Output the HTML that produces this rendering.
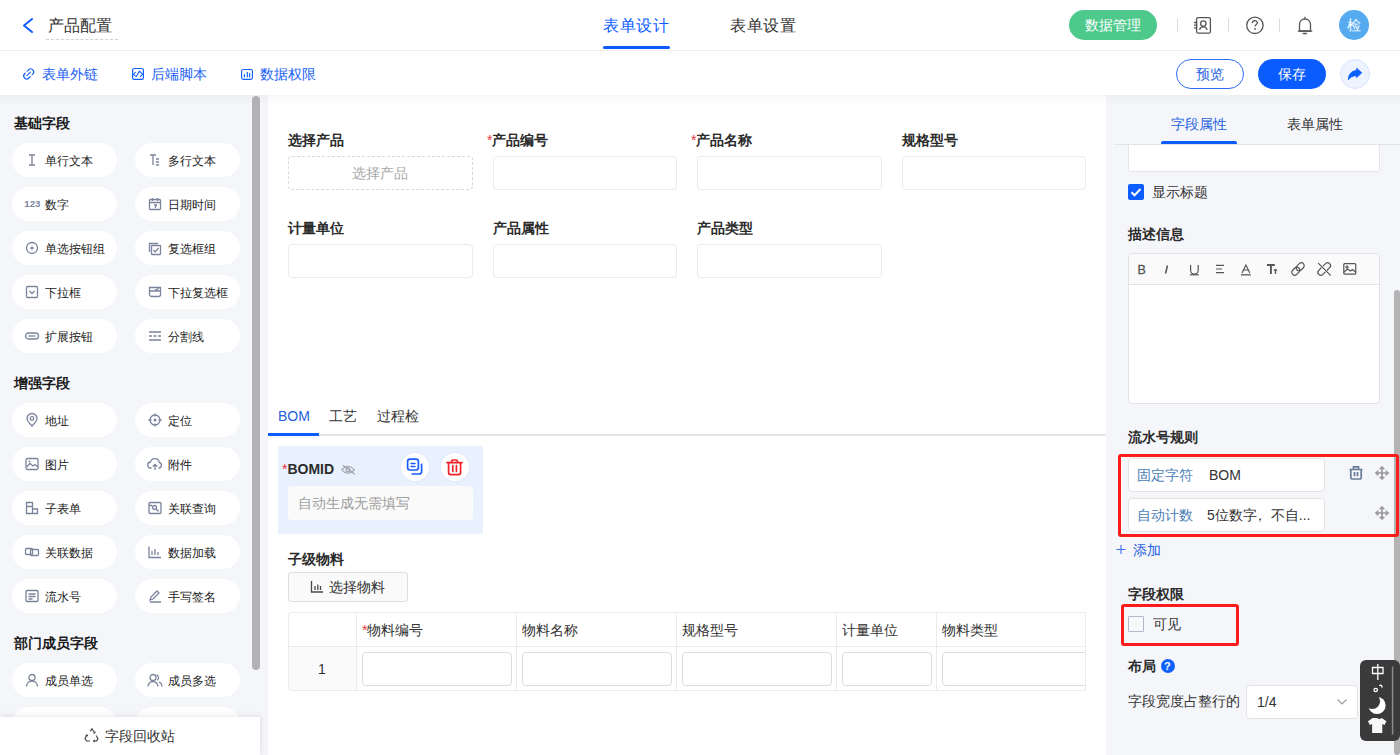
<!DOCTYPE html>
<html><head><meta charset="utf-8">
<style>
*{box-sizing:border-box;margin:0;padding:0}
html,body{width:1400px;height:755px;overflow:hidden;background:#fff;font-family:"Liberation Sans",sans-serif;color:#333}
.a{position:absolute}
.t{position:absolute;white-space:nowrap;line-height:20px}
svg{position:absolute;overflow:visible}
/* header */
#hdr{left:0;top:0;width:1400px;height:51px;background:#fff;border-bottom:1px solid #eeeeee}
#bar2{left:0;top:51px;width:1400px;height:45px;background:#fff}
.blue{color:#0d5cff}
.link{font-size:14px;color:#1a5ff5}
.sep{position:absolute;top:18px;width:1px;height:14px;background:#dcdcdc}
/* left */
#left{left:0;top:95px;width:268px;height:660px;background:#f5f6fa}
.sec{position:absolute;left:14px;font-size:14px;font-weight:bold;color:#1a1a1a;line-height:20px}
.pill{position:absolute;width:105px;height:34px;border-radius:17px;background:#fff}
.pill .t{left:33px;top:8px;font-size:12px;color:#222}
.pill svg{left:12px;top:11px}
/* main */
#main{left:268px;top:95px;width:838px;height:660px;background:#fff}
.lbl{position:absolute;font-size:14px;font-weight:bold;color:#2b2b2b;line-height:20px;white-space:nowrap}
.req{color:#e8363b;font-weight:normal}
.inp{position:absolute;width:184px;height:34px;border:1px solid #eaeaea;border-radius:4px;background:#fff}
/* right */
#right{left:1106px;top:95px;width:294px;height:660px;background:#f5f6fa}
</style></head><body>

<!-- HEADER -->
<div id="hdr" class="a"></div>
<svg style="left:0;top:0" width="60" height="50"><path d="M32 19 L24 25.5 L32 32" fill="none" stroke="#0d5cff" stroke-width="2" stroke-linecap="round" stroke-linejoin="round"/></svg>
<div class="t" style="left:48px;top:16px;font-size:16px;color:#333">产品配置</div>
<div class="a" style="left:46px;top:39px;width:72px;height:0;border-top:1px dashed #d0d0d0"></div>

<div class="t blue" style="left:603px;top:16px;font-size:16px;letter-spacing:0.7px">表单设计</div>
<div class="a" style="left:603px;top:46px;width:67px;height:3px;border-radius:2px;background:#0d5cff"></div>
<div class="t" style="left:730px;top:16px;font-size:16px;color:#333;letter-spacing:0.7px">表单设置</div>

<div class="a" style="left:1069px;top:10px;width:88px;height:30px;border-radius:15px;background:#4cc98b"></div>
<div class="t" style="left:1085px;top:15px;font-size:14px;color:#fff">数据管理</div>
<div class="sep" style="left:1177px"></div>
<div class="sep" style="left:1228px"></div>
<div class="sep" style="left:1279px"></div>
<svg style="left:0;top:0" width="1400" height="50"><g fill="none" stroke="#555" stroke-width="1.3">
<rect x="1196.6" y="17.6" width="13.8" height="15.6" rx="1.5"/>
<circle cx="1203.3" cy="23.6" r="2.7"/><path d="M1199.6 29.8 C1200.2 25.8 1206.4 25.8 1207 29.8"/>
<path d="M1194 22.5h3.3M1194 25.1h3.3M1194 27.8h3.3"/>
<circle cx="1254.9" cy="25.3" r="8.2"/>
<path d="M1252.4 22.9 C1252.4 20 1257.4 20 1257.4 22.7 C1257.4 24.6 1255 24.4 1255 26.6"/>
<path d="M1299.5 31 V24.5 C1299.5 21 1302 19 1305 19 C1308 19 1310.5 21 1310.5 24.5 V31 Z" stroke-linejoin="round"/>
<path d="M1298.3 31.2h13.4" stroke-linecap="round"/><path d="M1303.3 33.5h3.2" stroke-linecap="round"/><path d="M1305 16.8v2"/>
</g><circle cx="1255" cy="29" r="0.9" fill="#555"/></svg>
<div class="a" style="left:1339px;top:10px;width:30px;height:30px;border-radius:15px;background:#55aaf0"></div>
<div class="t" style="left:1347px;top:15px;font-size:14px;color:#fff">检</div>

<!-- BAR 2 -->
<svg style="left:0;top:0" width="400" height="95"><g fill="none" stroke="#1060ff" stroke-width="1.15" stroke-linecap="round">
<g transform="translate(28.7,73.9) rotate(-45)"><path d="M0.9 -3H2.8A3 3 0 0 1 2.8 3H1.9M-0.9 3H-2.8A3 3 0 0 1 -2.8 -3H-1.9M-2.4 0H2.4"/></g>
<rect x="132.6" y="68.5" width="10.8" height="10.9" rx="1.6"/><path d="M135.4 72.3L133.2 74.4L136.3 76.6L139.4 71.2L142.6 74.3L140.3 76.6" stroke-width="1.05"/>
<rect x="241.6" y="69.5" width="10.8" height="9.9" rx="1.8"/><path d="M244.4 74.6v2.2M247.3 72.3v4.5M249.6 73.6v3.2" stroke-width="1.2"/>
</g></svg>
<div class="t link" style="left:42px;top:64px">表单外链</div>
<div class="t link" style="left:151px;top:64px">后端脚本</div>
<div class="t link" style="left:260px;top:64px">数据权限</div>

<div class="a" style="left:1176px;top:59px;width:68px;height:30px;border-radius:15px;border:1px solid #2c6cf6;background:#fff"></div>
<div class="t" style="left:1196px;top:64px;font-size:14px;color:#1f5fe0">预览</div>
<div class="a" style="left:1258px;top:59px;width:68px;height:30px;border-radius:15px;background:#0b5cff"></div>
<div class="t" style="left:1278px;top:64px;font-size:14px;color:#fff">保存</div>
<div class="a" style="left:1340px;top:59px;width:30px;height:30px;border-radius:15px;border:1px solid #d8e5fb;background:#eef4ff"></div>
<svg style="left:0;top:0" width="1400" height="95"><path d="M1348.4 79.8 C1348.3 74.5 1351.5 70.8 1356.6 70.5 L1356.6 68.2 L1361.8 72.8 L1356.6 77.6 L1356.6 75.8 C1352.5 75.8 1350.2 77.2 1348.4 79.8 Z" fill="#0a5fff" stroke="#0a5fff" stroke-width="0.8" stroke-linejoin="round"/></svg>

<!-- LEFT PANEL -->
<div id="left" class="a"></div>

<div class="a" style="left:252px;top:96px;width:8px;height:574px;border-radius:4px;background:#b3b3b3"></div>

<div class="sec" style="top:113px">基础字段</div>
<div class="sec" style="top:373px">增强字段</div>
<div class="sec" style="top:633px">部门成员字段</div>

<div class="pill" style="left:12px;top:143px"><svg width="16" height="14" style="left:12px;top:10px"><path d="M5 2h6M8 2v10M5 12h6" fill="none" stroke="#7b849c" stroke-width="1.3"/></svg><div class="t">单行文本</div></div>
<div class="pill" style="left:135px;top:143px"><svg width="16" height="14" style="left:12px;top:10px"><path d="M3 2h6M6 2v10M9 6h3M9 9h3M9 12h3" fill="none" stroke="#7b849c" stroke-width="1.3"/></svg><div class="t">多行文本</div></div>
<div class="pill" style="left:12px;top:187px"><svg width="16" height="14" style="left:12px;top:10px"><text x="0.3" y="10.1" style="font-family:'Liberation Sans',sans-serif;font-size:9.6px;font-weight:bold" fill="#7b849c">123</text></svg><div class="t">数字</div></div>
<div class="pill" style="left:135px;top:187px"><svg width="16" height="14" style="left:12px;top:10px"><rect x="2.5" y="2.5" width="11" height="10" rx="1" fill="none" stroke="#7b849c" stroke-width="1.3"/><path d="M2.5 5.5h11M5.5 1v3M10.5 1v3M7 8h2.5l-1.5 3" fill="none" stroke="#7b849c" stroke-width="1.3"/></svg><div class="t">日期时间</div></div>
<div class="pill" style="left:12px;top:231px"><svg width="16" height="14" style="left:12px;top:10px"><circle cx="8" cy="7" r="5.5" fill="none" stroke="#7b849c" stroke-width="1.3"/><circle cx="8" cy="7" r="1.6" fill="#7b849c"/></svg><div class="t">单选按钮组</div></div>
<div class="pill" style="left:135px;top:231px"><svg width="16" height="14" style="left:12px;top:10px"><path d="M2.5 11V2.5H11" fill="none" stroke="#7b849c" stroke-width="1.3"/><rect x="4.5" y="4.5" width="9" height="9" rx="0.5" fill="none" stroke="#7b849c" stroke-width="1.3"/><path d="M6.5 9l1.7 1.7L11.5 7" fill="none" stroke="#7b849c" stroke-width="1.3"/></svg><div class="t">复选框组</div></div>
<div class="pill" style="left:12px;top:275px"><svg width="16" height="14" style="left:12px;top:10px"><rect x="2.5" y="1.5" width="11" height="11" rx="1" fill="none" stroke="#7b849c" stroke-width="1.3"/><path d="M5.5 6l2.5 2.5L10.5 6" fill="none" stroke="#7b849c" stroke-width="1.3"/></svg><div class="t">下拉框</div></div>
<div class="pill" style="left:135px;top:275px"><svg width="16" height="14" style="left:12px;top:10px"><path d="M2.5 2.5h11v7a2 2 0 0 1-2 2h-7a2 2 0 0 1-2-2z M2.5 6h11" fill="none" stroke="#7b849c" stroke-width="1.3"/><path d="M8 4.5l1.5 1 2-2.5" fill="none" stroke="#7b849c" stroke-width="1.3"/></svg><div class="t">下拉复选框</div></div>
<div class="pill" style="left:12px;top:319px"><svg width="16" height="14" style="left:12px;top:10px"><rect x="1.5" y="4" width="13" height="6" rx="3" fill="none" stroke="#7b849c" stroke-width="1.3"/><path d="M4.5 7h7" fill="none" stroke="#7b849c" stroke-width="1.3"/></svg><div class="t">扩展按钮</div></div>
<div class="pill" style="left:135px;top:319px"><svg width="16" height="14" style="left:12px;top:10px"><path d="M2 3h12M2 7h3M6.5 7h3M11 7h3M2 11h12" fill="none" stroke="#7b849c" stroke-width="1.3"/></svg><div class="t">分割线</div></div>
<div class="pill" style="left:12px;top:403px"><svg width="16" height="14" style="left:12px;top:10px"><path d="M8 13C4.5 9.5 3 7.5 3 5.5a5 5 0 0 1 10 0c0 2-1.5 4-5 7.5z" fill="none" stroke="#7b849c" stroke-width="1.3"/><circle cx="8" cy="5.5" r="1.8" fill="none" stroke="#7b849c" stroke-width="1.3"/></svg><div class="t">地址</div></div>
<div class="pill" style="left:135px;top:403px"><svg width="16" height="14" style="left:12px;top:10px"><circle cx="8" cy="7" r="5" fill="none" stroke="#7b849c" stroke-width="1.3"/><circle cx="8" cy="7" r="1.5" fill="#7b849c"/><path d="M8 0.5v3M8 10.5v3M1.5 7h3M11.5 7h3" fill="none" stroke="#7b849c" stroke-width="1.3"/></svg><div class="t">定位</div></div>
<div class="pill" style="left:12px;top:447px"><svg width="16" height="14" style="left:12px;top:10px"><rect x="2" y="1.5" width="12" height="11" rx="1.5" fill="none" stroke="#7b849c" stroke-width="1.3"/><path d="M2.5 10l3.5-3.5 3 2.5 2-1.5 3 2.5" fill="none" stroke="#7b849c" stroke-width="1.3"/><circle cx="5.5" cy="4.5" r="0.9" fill="#7b849c"/></svg><div class="t">图片</div></div>
<div class="pill" style="left:135px;top:447px"><svg width="16" height="14" style="left:12px;top:10px"><path d="M4.5 11H4a3 3 0 0 1-0.5-6 4.5 4.5 0 0 1 8.8 0.5A2.8 2.8 0 0 1 12 11h-0.5M8 13V7.5M5.8 9.5L8 7.3l2.2 2.2" fill="none" stroke="#7b849c" stroke-width="1.3"/></svg><div class="t">附件</div></div>
<div class="pill" style="left:12px;top:491px"><svg width="16" height="14" style="left:12px;top:10px"><path d="M2.5 1.5h6v11h-6zM2.5 5.5h6M8.5 8h5v4.5h-5" fill="none" stroke="#7b849c" stroke-width="1.3"/></svg><div class="t">子表单</div></div>
<div class="pill" style="left:135px;top:491px"><svg width="16" height="14" style="left:12px;top:10px"><rect x="2" y="1.5" width="12" height="11" rx="1" fill="none" stroke="#7b849c" stroke-width="1.3"/><circle cx="7.5" cy="6.5" r="2" fill="none" stroke="#7b849c" stroke-width="1.3"/><path d="M9 8l2.5 2.5M2 4.5h3" fill="none" stroke="#7b849c" stroke-width="1.3"/></svg><div class="t">关联查询</div></div>
<div class="pill" style="left:12px;top:535px"><svg width="16" height="14" style="left:12px;top:10px"><rect x="1.5" y="3.5" width="7" height="6" rx="1" fill="none" stroke="#7b849c" stroke-width="1.3"/><rect x="6.5" y="4.5" width="8" height="6" rx="1" fill="none" stroke="#7b849c" stroke-width="1.3"/></svg><div class="t">关联数据</div></div>
<div class="pill" style="left:135px;top:535px"><svg width="16" height="14" style="left:12px;top:10px"><path d="M2 1.5V12.5h12M5 10V6M8 10V4M11 10V7" fill="none" stroke="#7b849c" stroke-width="1.3"/></svg><div class="t">数据加载</div></div>
<div class="pill" style="left:12px;top:579px"><svg width="16" height="14" style="left:12px;top:10px"><rect x="2" y="1.5" width="12" height="11" rx="1" fill="none" stroke="#7b849c" stroke-width="1.3"/><path d="M4.5 5h7M4.5 7.5h7M4.5 10h4" fill="none" stroke="#7b849c" stroke-width="1.3"/></svg><div class="t">流水号</div></div>
<div class="pill" style="left:135px;top:579px"><svg width="16" height="14" style="left:12px;top:10px"><path d="M3 11l1-3 6-6 2 2-6 6zM3 13h11" fill="none" stroke="#7b849c" stroke-width="1.3"/></svg><div class="t">手写签名</div></div>
<div class="pill" style="left:12px;top:663px"><svg width="16" height="14" style="left:12px;top:10px"><circle cx="8" cy="4.5" r="3" fill="none" stroke="#7b849c" stroke-width="1.3"/><path d="M2.5 13.5a5.5 5.5 0 0 1 11 0" fill="none" stroke="#7b849c" stroke-width="1.3"/></svg><div class="t">成员单选</div></div>
<div class="pill" style="left:135px;top:663px"><svg width="16" height="14" style="left:12px;top:10px"><circle cx="6" cy="4.5" r="3" fill="none" stroke="#7b849c" stroke-width="1.3"/><path d="M1 13.5a5 5 0 0 1 10 0M9.5 1.8a3 3 0 0 1 0.5 5.5M12 9a5 5 0 0 1 3 4.5" fill="none" stroke="#7b849c" stroke-width="1.3"/></svg><div class="t">成员多选</div></div>
<div class="pill" style="left:12px;top:707px"></div><div class="pill" style="left:135px;top:707px"></div>
<div class="a" style="left:0;top:717px;width:260px;height:38px;background:#fff;box-shadow:0 -2px 6px rgba(0,0,0,0.06),2px 0 4px rgba(0,0,0,0.04)"></div>
<svg width="16" height="16" style="left:84px;top:728px"><path d="M6.3 3.2L8 0.8l2.5 4M12 7.5l2 3.2-1.5 2.3H9.5M6 13H2.5L1 10.5 3 7" fill="none" stroke="#444" stroke-width="1.2"/><path d="M9.5 5.2l1.3-0.2 0.4-1.3M11 12l-1.3 1 1.2 1M3.8 8.2L3 7l-1.3 0.6" fill="none" stroke="#444" stroke-width="1.1"/></svg>
<div class="t" style="left:105px;top:726px;font-size:14px;color:#333">字段回收站</div>

<!-- MAIN -->
<div id="main" class="a"></div>


<div class="lbl" style="left:288px;top:130px">选择产品</div>
<div class="a" style="left:288px;top:156px;width:185px;height:34px;border:1px dashed #d9d9d9;border-radius:4px"></div>
<div class="t" style="left:352px;top:163px;font-size:14px;color:#a8a8a8">选择产品</div>
<div class="lbl" style="left:487px;top:130px"><span class="req">*</span>产品编号</div>
<div class="inp" style="left:493px;top:156px"></div>
<div class="lbl" style="left:691px;top:130px"><span class="req">*</span>产品名称</div>
<div class="inp" style="left:697px;top:156px;width:185px"></div>
<div class="lbl" style="left:902px;top:130px">规格型号</div>
<div class="inp" style="left:902px;top:156px"></div>
<div class="lbl" style="left:288px;top:218px">计量单位</div>
<div class="inp" style="left:288px;top:244px;width:185px"></div>
<div class="lbl" style="left:493px;top:218px">产品属性</div>
<div class="inp" style="left:493px;top:244px"></div>
<div class="lbl" style="left:697px;top:218px">产品类型</div>
<div class="inp" style="left:697px;top:244px;width:185px"></div>

<!-- tabs -->
<div class="t" style="left:278px;top:406px;font-size:14px;color:#1f5fe0">BOM</div>
<div class="t" style="left:329px;top:406px;font-size:14px;color:#333">工艺</div>
<div class="t" style="left:377px;top:406px;font-size:14px;color:#333">过程检</div>
<div class="a" style="left:268px;top:434px;width:838px;height:2px;background:#e4e4e4"></div>
<div class="a" style="left:268px;top:433px;width:51px;height:3px;background:#0d5cff"></div>

<!-- BOMID card -->
<div class="a" style="left:278px;top:446px;width:205px;height:88px;background:#e9f1fe"></div>
<div class="lbl" style="left:282px;top:459px"><span class="req">*</span>BOMID</div>
<div class="a" style="left:401px;top:453px;width:28px;height:28px;border-radius:14px;background:#fff;box-shadow:0 0 3px rgba(30,80,200,0.08)"></div>
<div class="a" style="left:441px;top:453px;width:28px;height:28px;border-radius:14px;background:#fff;box-shadow:0 0 3px rgba(30,80,200,0.08)"></div>
<svg style="left:0;top:0" width="1400" height="755">
<g fill="none" stroke="#a0a0a8" stroke-width="1.1"><path d="M341.8 469.8 Q348 462.8 354.4 469.8 Q348 476.8 341.8 469.8Z"/><circle cx="348" cy="469.8" r="2"/><path d="M342.8 465.3 L354.8 474.3"/></g>
<g fill="none" stroke="#1a5cff" stroke-width="1.7" stroke-linecap="round"><rect x="407.6" y="459.2" width="10.8" height="10.8" rx="2.4"/><path d="M411 463.6h4M411 466.6h4" stroke-width="1.5"/><path d="M421.6 464.3V471.6a2.4 2.4 0 0 1-2.4 2.4H412.2"/></g>
<g fill="none" stroke="#f0232a" stroke-width="1.7" stroke-linecap="round"><path d="M447 462.6h15"/><path d="M451.6 462.4v-1.2a1.2 1.2 0 0 1 1.2-1.2h3.4a1.2 1.2 0 0 1 1.2 1.2v1.2"/><path d="M448.6 462.8v9.8a2 2 0 0 0 2 2h8a2 2 0 0 0 2-2v-9.8"/><path d="M452.8 465.6v5.8M456.4 465.6v5.8"/></g>
</svg>
<div class="a" style="left:288px;top:486px;width:185px;height:34px;border-radius:4px;background:#fafafa"></div>
<div class="t" style="left:298px;top:493px;font-size:14px;color:#9e9e9e">自动生成无需填写</div>

<div class="lbl" style="left:288px;top:549px">子级物料</div>
<div class="a" style="left:288px;top:572px;width:120px;height:30px;border:1px solid #dedede;border-radius:3px;background:#fafafa"></div>
<svg width="16" height="16" style="left:309px;top:579px"><path d="M2.5 2v11h11.5M6 11V7M8.8 11V5.5M11.5 11V7" fill="none" stroke="#4a4a4a" stroke-width="1.3"/></svg>
<div class="t" style="left:329px;top:577px;font-size:14px;color:#333">选择物料</div>

<!-- table -->
<div class="a" style="left:288px;top:612px;width:798px;height:79px;border:1px solid #ebebeb;border-radius:3px 0 0 3px"></div>
<div class="a" style="left:289px;top:647px;width:67px;height:43px;background:#fafafa"></div>
<div class="a" style="left:289px;top:646px;width:796px;height:1px;background:#ebebeb"></div>
<div class="a" style="left:356px;top:613px;width:1px;height:77px;background:#ebebeb"></div>
<div class="a" style="left:516px;top:613px;width:1px;height:77px;background:#ebebeb"></div>
<div class="a" style="left:676px;top:613px;width:1px;height:77px;background:#ebebeb"></div>
<div class="a" style="left:836px;top:613px;width:1px;height:77px;background:#ebebeb"></div>
<div class="a" style="left:936px;top:613px;width:1px;height:77px;background:#ebebeb"></div>
<div class="t" style="left:362px;top:620px;font-size:14px;color:#333"><span style="color:#e8363b">*</span>物料编号</div>
<div class="t" style="left:522px;top:620px;font-size:14px;color:#333">物料名称</div>
<div class="t" style="left:682px;top:620px;font-size:14px;color:#333">规格型号</div>
<div class="t" style="left:842px;top:620px;font-size:14px;color:#333">计量单位</div>
<div class="t" style="left:942px;top:620px;font-size:14px;color:#333">物料类型</div>
<div class="t" style="left:318px;top:659px;font-size:14px;color:#333">1</div>
<div class="a" style="left:362px;top:652px;width:150px;height:34px;border:1px solid #dcdcdc;border-radius:4px"></div>
<div class="a" style="left:522px;top:652px;width:150px;height:34px;border:1px solid #dcdcdc;border-radius:4px"></div>
<div class="a" style="left:682px;top:652px;width:150px;height:34px;border:1px solid #dcdcdc;border-radius:4px"></div>
<div class="a" style="left:842px;top:652px;width:90px;height:34px;border:1px solid #dcdcdc;border-radius:4px"></div>
<div class="a" style="left:937px;top:647px;width:148px;height:43px;overflow:hidden"><div class="a" style="left:5px;top:5px;width:160px;height:34px;border:1px solid #dcdcdc;border-radius:4px"></div></div>


<!-- RIGHT -->
<div id="right" class="a"></div>

<div class="t" style="left:1171px;top:114px;font-size:14px;color:#1f5fe0">字段属性</div>
<div class="t" style="left:1287px;top:114px;font-size:14px;color:#333">表单属性</div>
<div class="a" style="left:1128px;top:120px;width:252px;height:52px;background:#fff;border:1px solid #e6e6e6;border-radius:2px"></div>
<div class="a" style="left:1106px;top:95px;width:288px;height:49px;background:#f5f6fa"></div>
<div class="t" style="left:1171px;top:114px;font-size:14px;color:#1f5fe0">字段属性</div>
<div class="t" style="left:1287px;top:114px;font-size:14px;color:#333">表单属性</div>
<div class="a" style="left:1114px;top:144px;width:286px;height:1px;background:#e3e4e8"></div>
<div class="a" style="left:1161px;top:141px;width:76px;height:3px;border-radius:2px 2px 0 0;background:#0d5cff"></div>

<div class="a" style="left:1128px;top:184px;width:16px;height:16px;border-radius:2px;background:#0d5cff"></div>
<svg width="16" height="16" style="left:1128px;top:184px"><path d="M3.5 8.2l3 3 6-6.2" fill="none" stroke="#fff" stroke-width="2"/></svg>
<div class="t" style="left:1152px;top:182px;font-size:14px;color:#333">显示标题</div>

<div class="lbl" style="left:1128px;top:224px">描述信息</div>
<div class="a" style="left:1128px;top:253px;width:252px;height:151px;background:#fff;border:1px solid #e3e3e3;border-radius:4px"></div>
<div class="a" style="left:1129px;top:254px;width:250px;height:31px;background:#fafafa;border-bottom:1px solid #e3e3e3;border-radius:4px 4px 0 0"></div>

<div class="lbl" style="left:1128px;top:427px">流水号规则</div>
<svg style="left:0;top:0" width="1400" height="755">
<text x="1137.5" y="274" style="font-family:'Liberation Sans',sans-serif;font-size:12.5px" fill="#555" stroke="#555" stroke-width="0.3">B</text>
<path d="M1167.5 265.5 L1165.5 273.5" stroke="#555" stroke-width="1.6"/>
<g fill="none" stroke="#555" stroke-width="1.2">
<path d="M1190.6 265V270.3a3.8 3.8 0 0 0 7.6 0V265"/><path d="M1190 274.8h8.8"/>
<path d="M1216 265.3h8M1216 269h6M1216 272.7h8"/>
<path d="M1242 273L1245.9 265L1249.8 273M1243.5 270h4.8"/><path d="M1241 274.8h9.7" stroke-width="1.3"/>
</g>
<path d="M1267 265h7.8M1270.9 265v9" stroke="#555" stroke-width="1.9"/><path d="M1273.8 270h3.3M1275.45 270v4" stroke="#555" stroke-width="1.3"/>
<g fill="none" stroke="#555" stroke-width="1.2" stroke-linecap="round">
<g transform="translate(1298,269) rotate(-45)"><rect x="-7.6" y="-2.9" width="9" height="5.8" rx="2.9"/><rect x="-1.4" y="-2.9" width="9" height="5.8" rx="2.9"/></g>
<g transform="translate(1324.2,269) rotate(-45)"><path d="M-1.5 -2.9h-3.3a2.9 2.9 0 0 0 0 5.8h3.3M1.5 -2.9h3.3a2.9 2.9 0 0 1 0 5.8h-3.3"/></g><path d="M1318.5 263.3l11.8 11.8"/>
<rect x="1343.8" y="263.6" width="11.9" height="10.6" rx="1"/><path d="M1344 272l3.5-3 3 2 2-1.5 3.2 2.5"/><circle cx="1347" cy="267" r="1"/>
</g>
</svg>

<div class="a" style="left:1394px;top:290px;width:6px;height:465px;border-radius:3px;background:#b3b3b3"></div>

<div class="a" style="left:1118px;top:454px;width:281px;height:83px;border:3px solid #fc1a1a;border-radius:3px"></div>
<div class="a" style="left:1128px;top:458px;width:197px;height:34px;background:#fff;border:1px solid #e3e3e3;border-radius:4px"></div>
<div class="t" style="left:1137px;top:465px;font-size:14px;color:#4a7db8">固定字符</div>
<div class="t" style="left:1209px;top:465px;font-size:14px;color:#333">BOM</div>
<div class="a" style="left:1128px;top:498px;width:197px;height:34px;background:#fff;border:1px solid #e3e3e3;border-radius:4px"></div>
<div class="t" style="left:1137px;top:505px;font-size:14px;color:#4a7db8">自动计数</div>
<div class="t" style="left:1207px;top:505px;font-size:14px;color:#333">5位数字<span style="position:relative;left:-4px">，</span>不自...</div>
<svg style="left:0;top:0" width="1400" height="755"><g fill="none" stroke="#6b7a99" stroke-width="1.7">
<path d="M1349.5 469.5h13M1353.5 469.5v-2.6h5v2.6M1350.8 469.5v8.2a1.3 1.3 0 0 0 1.3 1.3h7.8a1.3 1.3 0 0 0 1.3-1.3v-8.2M1354.5 472v4.2M1357.5 472v4.2"/></g>
<g stroke="#999" stroke-width="1.6" fill="#999">
<path d="M1382 467v12M1376 473h12" fill="none"/><path d="M1379.6 469l2.4-2.8 2.4 2.8zM1379.6 477l2.4 2.8 2.4-2.8zM1378 470.6l-2.8 2.4 2.8 2.4zM1386 470.6l2.8 2.4-2.8 2.4z" stroke-width="0.8" stroke-linejoin="round"/>
<path d="M1382 507v12M1376 513h12" fill="none"/><path d="M1379.6 509l2.4-2.8 2.4 2.8zM1379.6 517l2.4 2.8 2.4-2.8zM1378 510.6l-2.8 2.4 2.8 2.4zM1386 510.6l2.8 2.4-2.8 2.4z" stroke-width="0.8" stroke-linejoin="round"/>
</g></svg>
<svg width="12" height="12" style="left:1116px;top:544px"><path d="M5 1v9M0.5 5.5h9" stroke="#3b6ff0" stroke-width="1.1"/></svg>
<div class="t" style="left:1133px;top:540px;font-size:14px;color:#1f5fe0">添加</div>

<div class="lbl" style="left:1128px;top:584px">字段权限</div>
<div class="a" style="left:1121px;top:604px;width:118px;height:42px;border:3px solid #fc1a1a;border-radius:3px"></div>
<div class="a" style="left:1128px;top:616px;width:16px;height:16px;border:1px solid #b3b8c8;border-radius:1px;background:#f7f8fc"></div>
<div class="t" style="left:1153px;top:614px;font-size:14px;color:#333">可见</div>

<div class="lbl" style="left:1128px;top:656px">布局</div>
<div class="a" style="left:1161px;top:659px;width:14px;height:14px;border-radius:7px;background:#0d62ff"></div>
<div class="t" style="left:1164px;top:656px;font-size:11px;font-weight:bold;color:#fff">?</div>
<div class="t" style="left:1128px;top:690.5px;font-size:14px;color:#333">字段宽度占整行的</div>
<div class="a" style="left:1246px;top:685px;width:112px;height:34px;background:#fff;border:1px solid #e3e3e3;border-radius:4px"></div>
<div class="t" style="left:1257px;top:692px;font-size:14px;color:#333">1/4</div>
<svg width="14" height="14" style="left:1335px;top:695px"><path d="M2.5 4.5l4.5 4.5 4.5-4.5" fill="none" stroke="#999" stroke-width="1.1"/></svg>

<div class="a" style="left:1360px;top:660px;width:40px;height:81px;border-radius:6px;background:#3a3a3a"></div>
<svg style="left:0;top:0" width="1400" height="755">
<path d="M1392.6 666.5v68" stroke="#8a8a8a" stroke-width="1.5"/>
<g fill="none" stroke="#fff" stroke-width="1.3"><path d="M1372.5 667.5h10.5v6h-10.5zM1377.8 664v16"/>
<circle cx="1375.7" cy="690" r="1.7"/><path d="M1379.5 686a1.3 1.3 0 1 1 2 1.5"/></g>
<circle cx="1377" cy="705.4" r="8.6" fill="#fff"/><circle cx="1372.3" cy="701.2" r="7.8" fill="#3a3a3a"/>
<path d="M1372.6 718l-4.6 3.2 1.8 3.8 2.3-1v9h10.2v-9l2.3 1 1.8-3.8-4.6-3.2q-2.4 2.2-4.6 0z" fill="#f7f7f7"/>
</svg>


<div class="a" style="left:0;top:95px;width:1400px;height:10px;background:linear-gradient(rgba(0,0,0,0.032),rgba(0,0,0,0.018) 40%,rgba(0,0,0,0))"></div>
</body></html>
